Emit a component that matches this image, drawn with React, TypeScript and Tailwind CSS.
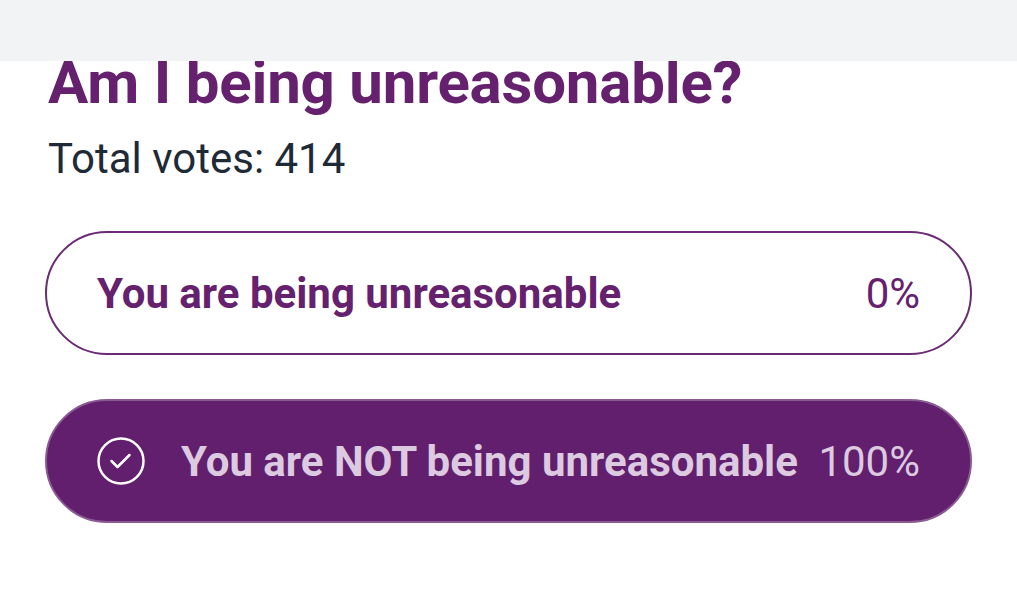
import React from 'react';

type Option = {
    label: string;
    percent: number;
    chosen?: boolean;
};

const options: Option[] = [
    { label: 'You are being unreasonable', percent: 0 },
    { label: 'You are NOT being unreasonable', percent: 100, chosen: true },
];

const CheckCircle: React.FC = () => (
    <svg width="48" height="48" viewBox="0 0 48 48" fill="none" className="shrink-0">
        <circle cx="24" cy="24" r="22.5" stroke="white" strokeWidth="2.5" />
        <path d="M14.5 24l6 6 12-12" stroke="white" strokeWidth="2.5" strokeLinecap="round" strokeLinejoin="round" />
    </svg>
);

const App: React.FC = () => {
    const total = 414;

    return (
        <div className="min-h-screen bg-white font-['Roboto',sans-serif] overflow-hidden">
            {/* top bar sits over the scrolled poll */}
            <div className="relative z-10 h-[61px] bg-[#f2f3f5]" />

            <main className="px-[45px] -mt-[14px]">
                <h1 className="pl-[3px] text-[60px] leading-[72px] font-bold text-[#65206e] tracking-[-0.2px]">
                    Am I being unreasonable?
                </h1>
                <p className="pl-[3px] mt-[16px] text-[42px] leading-[48px] text-[#1f2a37]">
                    Total votes: {total}
                </p>

                <div className="mt-[48px] flex flex-col gap-[44px] w-[927px]">
                    {options.map((opt) =>
                        opt.chosen ? (
                            <div
                                key={opt.label}
                                className="h-[124px] rounded-full bg-[#621f6d] border-2 border-[#8a5a92] flex items-center pl-[50px] pr-[50px]"
                            >
                                <CheckCircle />
                                <span className="ml-[36px] text-[42px] font-bold text-[#dccbe0]">{opt.label}</span>
                                <span className="ml-auto text-[42px] text-[#dccbe0]">{opt.percent}%</span>
                            </div>
                        ) : (
                            <div
                                key={opt.label}
                                className="h-[124px] rounded-full border-2 border-[#6a2a74] flex items-center pl-[50px] pr-[50px]"
                            >
                                <span className="text-[42px] font-bold text-[#65206e]">{opt.label}</span>
                                <span className="ml-auto text-[42px] text-[#65206e]">{opt.percent}%</span>
                            </div>
                        )
                    )}
                </div>
            </main>
        </div>
    );
};

export default App;
